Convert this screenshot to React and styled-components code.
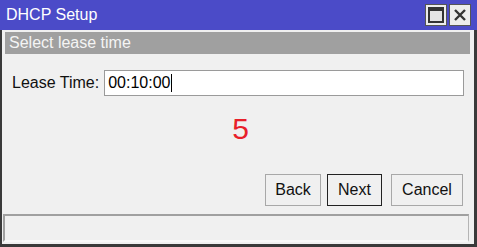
import styled, { createGlobalStyle } from "styled-components";

const GlobalStyle = createGlobalStyle`
  html, body {
    margin: 0;
    padding: 0;
    background: #f0f0f0;
  }
  body {
    font-family: "Liberation Sans", Arial, sans-serif;
  }
`;

const Window = styled.div`
  box-sizing: border-box;
  width: 477px;
  height: 247px;
  display: flex;
  flex-direction: column;
  background: #f0f0f0;
  border: 2px solid #3a3a3a;
  border-top: none;
  border-right: 3px solid #3a3a3a;
  border-bottom: 3px solid #3a3a3a;
`;

const TitleBar = styled.div`
  height: 30px;
  margin: 0 -3px 0 -2px;
  padding: 0 6px 0 6px;
  display: flex;
  align-items: center;
  justify-content: space-between;
  background: #4b4bc8;
  color: #ffffff;
  font-size: 16px;
`;

const TitleButtons = styled.div`
  display: flex;
  gap: 2px;
`;

const TitleButton = styled.div`
  box-sizing: border-box;
  width: 22px;
  height: 22px;
  background: #ececec;
  border: 1px solid #555;
  display: flex;
  align-items: center;
  justify-content: center;
`;

const SectionHeader = styled.div`
  margin: 2px 4px 0 3px;
  height: 22px;
  padding-left: 4px;
  display: flex;
  align-items: center;
  background: #a0a0a0;
  color: #f4f4f4;
  font-size: 16px;
`;

const FieldRow = styled.div`
  display: flex;
  align-items: center;
  margin: 16px 10px 0 10px;
  gap: 5px;
`;

const Label = styled.span`
  font-size: 16px;
  color: #111;
`;

const Input = styled.div`
  box-sizing: border-box;
  flex: 1;
  height: 26px;
  background: #fff;
  border: 1px solid #9a9a9a;
  display: flex;
  align-items: center;
  padding-left: 3px;
  font-size: 16px;
  color: #000;
`;

const Caret = styled.span`
  display: inline-block;
  width: 1px;
  height: 18px;
  background: #000;
  margin-left: 1px;
`;

const Step = styled.div`
  text-align: center;
  color: #e8202a;
  font-size: 30px;
  margin-top: 17px;
  height: 32px;
  line-height: 32px;
  padding-left: 5px;
`;

const ButtonRow = styled.div`
  display: flex;
  justify-content: flex-end;
  margin: 29px 11px 0 0;
`;

const Button = styled.div`
  box-sizing: border-box;
  height: 32px;
  width: ${({ $w }) => $w}px;
  margin-left: ${({ $gap }) => $gap}px;
  display: flex;
  align-items: center;
  justify-content: center;
  font-size: 16px;
  color: #111;
  background: #f0f0f0;
  border: 1px solid ${({ $primary }) => ($primary ? "#222" : "#a8a8a8")};
`;

const StatusBar = styled.div`
  margin: 8px 5px 2px 1px;
  flex: 1;
  border-top: 2px solid #a0a0a0;
  border-left: 2px solid #a0a0a0;
  border-right: 1px solid #b4b4b4;
  border-bottom: 2px solid #f8f8f8;
`;

function App() {
  return (
    <>
      <GlobalStyle />
      <Window>
        <TitleBar>
          <span>DHCP Setup</span>
          <TitleButtons>
            <TitleButton>
              <svg width="16" height="16" viewBox="0 0 16 16">
                <rect x="1" y="1" width="14" height="14" fill="#e4e4e4" stroke="#333" strokeWidth="2" />
                <rect x="1" y="1" width="14" height="3" fill="#333" />
              </svg>
            </TitleButton>
            <TitleButton>
              <svg width="14" height="14" viewBox="0 0 14 14">
                <path d="M2 2 L12 12 M12 2 L2 12" stroke="#333" strokeWidth="2.4" />
              </svg>
            </TitleButton>
          </TitleButtons>
        </TitleBar>
        <SectionHeader>Select lease time</SectionHeader>
        <FieldRow>
          <Label>Lease Time:</Label>
          <Input>
            00:10:00
            <Caret />
          </Input>
        </FieldRow>
        <Step>5</Step>
        <ButtonRow>
          <Button $w={56} $gap={0}>Back</Button>
          <Button $w={55} $gap={6} $primary>Next</Button>
          <Button $w={72} $gap={9}>Cancel</Button>
        </ButtonRow>
        <StatusBar />
      </Window>
    </>
  );
}

export default App;
